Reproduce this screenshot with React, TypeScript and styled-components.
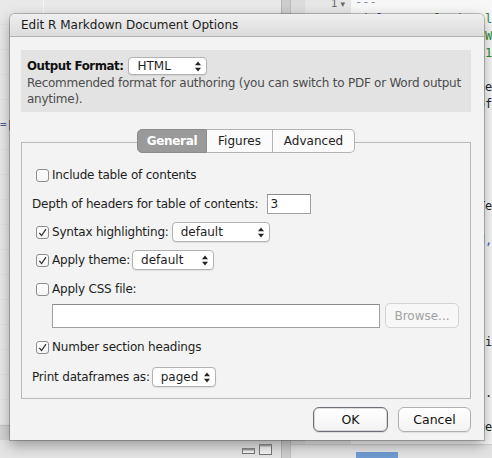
import React from "react";
import styled, { createGlobalStyle } from "styled-components";

const GlobalStyle = createGlobalStyle`
  html, body { margin: 0; padding: 0; }
  body {
    width: 492px;
    height: 458px;
    overflow: hidden;
    background: #e6e6e6;
    font-family: "DejaVu Sans", "Liberation Sans", sans-serif;
  }
`;

/* ---------- background (RStudio window behind the dialog) ---------- */

const Desktop = styled.div`
  position: relative;
  width: 492px;
  height: 458px;
  overflow: hidden;
  display: flex;
  background: #e6e6e6;
`;

const LeftPane = styled.div`
  width: 281px;
  flex-shrink: 0;
  display: flex;
  flex-direction: column;
  background: #e8e8e8;
  border-right: 1px solid #b5b5b5;
`;

const LeftList = styled.div`
  flex: 1;
  display: flex;
  flex-direction: column;
  padding-top: 14px;
  padding-left: 43px;
  background: repeating-linear-gradient(
    180deg,
    #e9e9e9 0px,
    #e9e9e9 24px,
    #e2e2e2 24px,
    #e2e2e2 25px
  );
`;

const LeftColumnLine = styled.div`
  height: 14px;
  margin-top: -14px;
  border-left: 1px solid #f6f6f6;
`;

const LeftMark = styled.div`
  margin-top: 104px;
  margin-left: -43px;
  font-family: "DejaVu Sans Mono", monospace;
  font-size: 11px;
  color: #4a5a8a;
  line-height: 14px;
`;

const LeftStatus = styled.div`
  height: 14px;
  background: #d4d4d4;
  border-top: 1px solid #c4c4c4;
`;

const LeftToolbar = styled.div`
  height: 18px;
  display: flex;
  align-items: center;
  justify-content: flex-end;
  gap: 4px;
  padding-right: 9px;
  background: #e4e4e4;
`;

const Splitter = styled.div`
  width: 8px;
  flex-shrink: 0;
  background: #cdcdcd;
  border-right: 1px solid #bdbdbd;
`;

const EditorPane = styled.div`
  flex: 1;
  min-width: 0;
  overflow: hidden;
  display: flex;
  flex-direction: column;
`;

const EditorBody = styled.div`
  flex: 1;
  display: flex;
  min-width: 0;
`;

const Gutter = styled.div`
  width: 60px;
  flex-shrink: 0;
  background: linear-gradient(90deg, #dcdcdc 0px, #dcdcdc 14px, #e6e6e6 14px);
  display: flex;
  justify-content: flex-end;
  align-items: flex-start;
  gap: 3px;
  padding-right: 6px;
  box-sizing: border-box;
  font-family: "DejaVu Sans Mono", monospace;
  font-size: 11px;
  line-height: 12px;
  color: #6a6a6a;
  margin-top: -2px;
`;

const Fold = styled.span`
  font-family: "DejaVu Sans", sans-serif;
  font-size: 9px;
`;

const Code = styled.div`
  flex: 1;
  min-width: 0;
  overflow: hidden;
  background: #f7f7f7;
  padding-left: 4px;
  font-family: "DejaVu Sans Mono", monospace;
  font-size: 12px;
  line-height: 17px;
  white-space: pre;
  margin-top: -6px;
`;

const CodeLine = styled.div`
  height: 17px;
`;

const CodeSpan = styled.span<{ $c: string }>`
  color: ${(p) => p.$c};
`;

const EditorFooter = styled.div`
  height: 13px;
  display: flex;
  align-items: flex-end;
  padding-left: 65px;
  background: #e3e3e3;
  border-top: 1px solid #cfcfcf;
`;

const ScrollThumb = styled.div`
  width: 42px;
  height: 6px;
  background: #6f9ad0;
`;

/* ---------- dialog ---------- */

const Dialog = styled.div`
  position: absolute;
  left: 10px;
  top: 14px;
  width: 474px;
  height: 426px;
  display: flex;
  flex-direction: column;
  background: #f2f3f2;
  border-radius: 5px 5px 0 0;
  box-shadow: 0 0 0 1px rgba(0, 0, 0, 0.22), 0 5px 14px rgba(0, 0, 0, 0.35);
  color: #1e1e1e;
  font-size: 12px;
`;

const TitleBar = styled.div`
  height: 22px;
  display: flex;
  align-items: center;
  padding-left: 11px;
  background: linear-gradient(180deg, #efefef 0%, #dcdcdc 100%);
  border-bottom: 1px solid #b3b3b3;
  border-radius: 5px 5px 0 0;
  font-size: 12px;
  color: #1c1c1c;
`;

const Body = styled.div`
  flex: 1;
  display: flex;
  flex-direction: column;
  padding: 13px 13px 0 11px;
`;

const FormatPanel = styled.div`
  height: 62px;
  box-sizing: border-box;
  padding: 7px 6px 5px 6px;
  background: #e3e3e3;
  display: flex;
  flex-direction: column;
`;

const FormatRow = styled.div`
  display: flex;
  align-items: center;
  height: 18px;
  gap: 5px;
`;

const BoldLabel = styled.span`
  font-weight: bold;
  font-size: 11.8px;
  color: #111;
  letter-spacing: -0.45px;
`;

const Description = styled.div`
  line-height: 16px;
  color: #4c4c4c;
  font-size: 12px;
  letter-spacing: -0.25px;
  white-space: nowrap;
`;

const TabArea = styled.div`
  margin-top: 17px;
  display: flex;
  flex-direction: column;
`;

const TabStrip = styled.div`
  position: relative;
  z-index: 1;
  display: flex;
  justify-content: center;
  height: 24px;
`;

const Tab = styled.div<{ $w: number; $active?: boolean; $pos: "first" | "mid" | "last" }>`
  width: ${(p) => p.$w}px;
  height: 24px;
  box-sizing: border-box;
  display: flex;
  align-items: center;
  justify-content: center;
  font-size: 12px;
  background: ${(p) => (p.$active ? "#9a9a9a" : "#fbfbfb")};
  color: ${(p) => (p.$active ? "#ffffff" : "#222")};
  font-weight: ${(p) => (p.$active ? "bold" : "normal")};
  letter-spacing: ${(p) => (p.$active ? "-0.3px" : "0")};
  border: 1px solid ${(p) => (p.$active ? "#8c8c8c" : "#b3b3b3")};
  border-left-width: ${(p) => (p.$pos === "first" ? 1 : 0)}px;
  border-radius: ${(p) =>
    p.$pos === "first" ? "5px 0 0 5px" : p.$pos === "last" ? "0 5px 5px 0" : "0"};
`;

const TabPanel = styled.div`
  margin-top: -11px;
  height: 257px;
  box-sizing: border-box;
  border: 1px solid #b8b8b8;
  padding: 22px 10px 0 10px;
  display: flex;
  flex-direction: column;
`;

const Row = styled.div<{ $mt?: number; $h?: number; $gap?: number }>`
  display: flex;
  align-items: center;
  height: ${(p) => p.$h ?? 20}px;
  margin-top: ${(p) => p.$mt ?? 0}px;
  gap: ${(p) => p.$gap ?? 6}px;
  white-space: nowrap;
  letter-spacing: -0.2px;
`;

const CheckLabel = styled.label`
  display: flex;
  align-items: center;
  gap: 3px;
  margin-left: 4px;
`;

const Box = styled.span`
  width: 13px;
  height: 13px;
  box-sizing: border-box;
  border: 1px solid #8e8e8e;
  border-radius: 3px;
  background: linear-gradient(180deg, #ffffff, #f4f4f4);
  display: flex;
  align-items: center;
  justify-content: center;
`;

const SelectBox = styled.div<{ $w: number; $h: number }>`
  width: ${(p) => p.$w}px;
  height: ${(p) => p.$h}px;
  box-sizing: border-box;
  display: flex;
  align-items: center;
  justify-content: space-between;
  padding: 0 5px 0 8px;
  background: #ffffff;
  border: 1px solid #b2b2b2;
  border-radius: 4px;
  box-shadow: 0 1px 1px rgba(0, 0, 0, 0.08);
  color: #1e1e1e;
  letter-spacing: 0;
`;

const TextInput = styled.div<{ $w: number; $h: number; $ml?: number }>`
  width: ${(p) => p.$w}px;
  height: ${(p) => p.$h}px;
  margin-left: ${(p) => p.$ml ?? 0}px;
  box-sizing: border-box;
  border: 1px solid #a0a0a0;
  border-top-color: #8a8a8a;
  background: #ffffff;
  display: flex;
  align-items: center;
  padding-left: 2px;
`;

const BrowseButton = styled.div`
  width: 74px;
  height: 25px;
  box-sizing: border-box;
  margin-left: -1px;
  border: 1px solid #d3d3d3;
  border-radius: 5px;
  background: #f7f7f7;
  color: #a2a2a2;
  display: flex;
  align-items: center;
  justify-content: center;
  letter-spacing: 0;
`;

const ButtonRow = styled.div`
  margin-top: 8px;
  display: flex;
  justify-content: flex-end;
  gap: 10px;
`;

const DialogButton = styled.div<{ $w: number; $default?: boolean }>`
  width: ${(p) => p.$w}px;
  height: 25px;
  box-sizing: border-box;
  border: 1px solid ${(p) => (p.$default ? "#6e7077" : "#b0b0b0")};
  border-radius: 6px;
  background: linear-gradient(180deg, #ffffff 0%, #f3f3f3 100%);
  box-shadow: ${(p) =>
    p.$default
      ? "inset 0 0 0 1px rgba(120,120,130,0.25), 0 1px 1px rgba(0,0,0,0.1)"
      : "0 1px 1px rgba(0,0,0,0.08)"};
  display: flex;
  align-items: center;
  justify-content: center;
  font-size: 12.5px;
  color: #111;
`;

/* ---------- drawings ---------- */

const Arrows = () => (
  <svg width="6" height="11" viewBox="0 0 6 11">
    <polygon points="0,4.2 3,0.5 6,4.2" fill="#222" />
    <polygon points="0,6.8 3,10.5 6,6.8" fill="#222" />
  </svg>
);

const Check = ({ on }: { on?: boolean }) => (
  <Box>
    {on && (
      <svg width="11" height="11" viewBox="0 0 11 11">
        <path d="M2.3 5.8 L4.6 8.6 L9 2.2" fill="none" stroke="#2a2a2a" strokeWidth="1.2" />
      </svg>
    )}
  </Box>
);

const Select = ({ value, w, h }: { value: string; w: number; h: number }) => (
  <SelectBox $w={w} $h={h}>
    <span>{value}</span>
    <Arrows />
  </SelectBox>
);

const PaneIcons = () => (
  <>
    <svg width="13" height="9" viewBox="0 0 13 9">
      <rect x="0.5" y="3.5" width="12" height="5" fill="#f4f4f4" stroke="#777" />
      <rect x="0.5" y="3.5" width="12" height="2" fill="#999" />
    </svg>
    <svg width="13" height="11" viewBox="0 0 13 11">
      <rect x="0.5" y="0.5" width="12" height="10" fill="#f4f4f4" stroke="#777" />
      <rect x="0.5" y="0.5" width="12" height="2" fill="#aaa" />
    </svg>
  </>
);

const KEY = "#3d56b8";
const STR = "#2f8a2f";
const TXT = "#222";

const codeLines: [string, string][][] = [
  [["---", "#7e8fb0"]],
  [["title: ", KEY], ['"Exploring linear models"', STR]],
  [["author: ", KEY], ['"Hadley A Wickham"', STR]],
  [["date: ", KEY], ['"September 11, 2017"', STR]],
  [["---", "#7e8fb0"]],
  [["Results appear beneath the code.", TXT]],
  [["It is the output of the chunk.", TXT]],
  [],
  [],
  [],
  [],
  [],
  [["plot(cars, main='Te.", TXT]],
  [],
  [["summary(cars$speed, x", KEY]],
  [],
  [],
  [],
  [],
  [],
  [["Add a chunk, then insert", TXT]],
  [],
  [],
  [["cars$dist <- sqrt(.", TXT]],
  [],
  [["Saving this file generates", TXT]],
];

export default function App() {
  return (
    <>
      <GlobalStyle />
      <Desktop>
        <LeftPane>
          <LeftList>
            <LeftColumnLine />
            <LeftMark>=|</LeftMark>
          </LeftList>
          <LeftStatus />
          <LeftToolbar>
            <PaneIcons />
          </LeftToolbar>
        </LeftPane>
        <Splitter />
        <EditorPane>
          <EditorBody>
            <Gutter>
              <span>1</span>
              <Fold>▾</Fold>
            </Gutter>
            <Code>
              {codeLines.map((line, i) => (
                <CodeLine key={i}>
                  {line.map(([t, c], j) => (
                    <CodeSpan key={j} $c={c}>
                      {t}
                    </CodeSpan>
                  ))}
                </CodeLine>
              ))}
            </Code>
          </EditorBody>
          <EditorFooter>
            <ScrollThumb />
          </EditorFooter>
        </EditorPane>

        <Dialog>
          <TitleBar>Edit R Markdown Document Options</TitleBar>
          <Body>
            <FormatPanel>
              <FormatRow>
                <BoldLabel>Output Format:</BoldLabel>
                <Select value="HTML" w={79} h={18} />
              </FormatRow>
              <Description>
                Recommended format for authoring (you can switch to PDF or Word output
                <br />
                anytime).
              </Description>
            </FormatPanel>

            <TabArea>
              <TabStrip>
                <Tab $w={70} $active $pos="first">General</Tab>
                <Tab $w={66} $pos="mid">Figures</Tab>
                <Tab $w={82} $pos="last">Advanced</Tab>
              </TabStrip>
              <TabPanel>
                <Row>
                  <CheckLabel>
                    <Check />
                    <span>Include table of contents</span>
                  </CheckLabel>
                </Row>
                <Row $mt={9} $gap={9}>
                  <span>Depth of headers for table of contents:</span>
                  <TextInput $w={44} $h={20}>3</TextInput>
                </Row>
                <Row $mt={8} $gap={3}>
                  <CheckLabel>
                    <Check on />
                    <span>Syntax highlighting:</span>
                  </CheckLabel>
                  <Select value="default" w={98} h={20} />
                </Row>
                <Row $mt={8} $gap={2}>
                  <CheckLabel>
                    <Check on />
                    <span>Apply theme:</span>
                  </CheckLabel>
                  <Select value="default" w={82} h={20} />
                </Row>
                <Row $mt={9}>
                  <CheckLabel>
                    <Check />
                    <span>Apply CSS file:</span>
                  </CheckLabel>
                </Row>
                <Row $mt={4} $h={25}>
                  <TextInput $w={328} $h={24} $ml={20} />
                  <BrowseButton>Browse...</BrowseButton>
                </Row>
                <Row $mt={9}>
                  <CheckLabel>
                    <Check on />
                    <span>Number section headings</span>
                  </CheckLabel>
                </Row>
                <Row $mt={10} $gap={2}>
                  <span>Print dataframes as:</span>
                  <Select value="paged" w={64} h={20} />
                </Row>
              </TabPanel>
            </TabArea>

            <ButtonRow>
              <DialogButton $w={75} $default>OK</DialogButton>
              <DialogButton $w={73}>Cancel</DialogButton>
            </ButtonRow>
          </Body>
        </Dialog>
      </Desktop>
    </>
  );
}
